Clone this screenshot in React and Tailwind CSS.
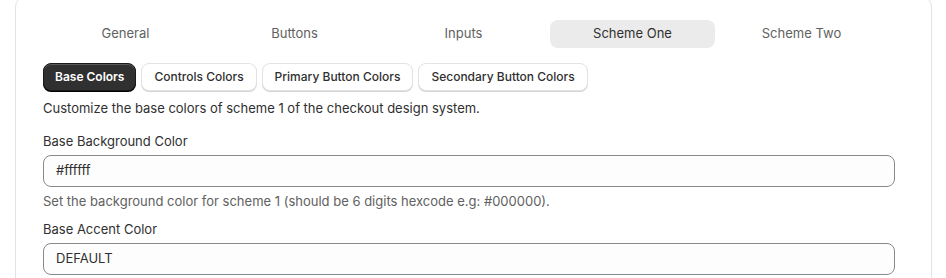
const TABS = ['General', 'Buttons', 'Inputs', 'Scheme One', 'Scheme Two']
const SUB_TABS = ['Base Colors', 'Controls Colors', 'Primary Button Colors', 'Secondary Button Colors']

function Field({ label, value, help }) {
  return (
    <div className="flex flex-col">
      <label className="text-[13px] leading-5 text-[#303030]">{label}</label>
      <div className="mt-1 flex h-8 w-[852px] items-center rounded-lg border border-[#8a8a8a] bg-[#fdfdfd] px-3 text-[13px] text-[#303030]">
        {value}
      </div>
      {help && <p className="mt-1 text-[13px] leading-5 text-[#616161]">{help}</p>}
    </div>
  )
}

export default function App() {
  const active = 'Scheme One'
  const activeSub = 'Base Colors'

  return (
    <div className="h-[278px] w-[946px] overflow-hidden bg-white font-['Inter',sans-serif]">
      <div className="ml-[15px] mr-[14px] -mt-[5px] h-[320px] rounded-xl border border-[#e3e3e3] bg-white pl-[27px] pt-[24px]">
        {/* Main tabs */}
        <div className="grid w-[841px] grid-cols-5 gap-1">
          {TABS.map((t) => (
            <button
              key={t}
              className={`h-7 rounded-lg text-[13px] font-normal ${
                t === active ? 'bg-[#ebebeb] text-[#303030]' : 'text-[#616161]'
              }`}
            >
              {t}
            </button>
          ))}
        </div>

        {/* Sub tabs */}
        <div className="mt-[15px] flex gap-[5px]">
          {SUB_TABS.map((t) =>
            t === activeSub ? (
              <button
                key={t}
                className="h-7 rounded-lg border border-[#1a1a1a] bg-[#303030] px-[11px] text-xs font-semibold text-white shadow-[inset_0_1px_0_rgba(255,255,255,0.2),0_1px_0_#000]"
              >
                {t}
              </button>
            ) : (
              <button
                key={t}
                className="h-7 rounded-lg border border-[#e3e3e3] bg-white px-3 text-xs font-medium text-[#303030] shadow-[0_1px_0_#d4d4d4]"
              >
                {t}
              </button>
            )
          )}
        </div>

        <p className="mt-[7px] text-[13px] leading-5 text-[#303030]">
          Customize the base colors of scheme 1 of the checkout design system.
        </p>

        <div className="mt-[13px] flex flex-col gap-2">
          <Field
            label="Base Background Color"
            value="#ffffff"
            help="Set the background color for scheme 1 (should be 6 digits hexcode e.g: #000000)."
          />
          <Field label="Base Accent Color" value="DEFAULT" />
        </div>
      </div>
    </div>
  )
}
